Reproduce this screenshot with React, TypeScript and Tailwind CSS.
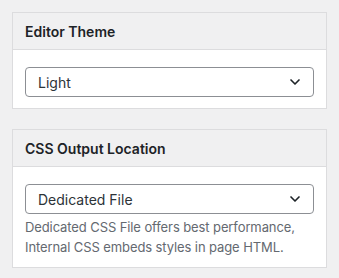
import { ChevronDown } from 'lucide-react';

interface PanelProps {
  title: string;
  value: string;
  description?: string;
}

function Panel({ title, value, description }: PanelProps) {
  return (
    <div className="border border-[#dcdcde] bg-white">
      {/* Header */}
      <div className="flex h-[37px] items-center border-b border-[#dcdcde] bg-[#f0f0f1] px-3">
        <h2 className="text-[14px] font-semibold text-[#1d2327]">{title}</h2>
      </div>

      {/* Body */}
      <div className={description ? 'px-3 pt-[17px] pb-[10px]' : 'px-3 pt-[17px] pb-[11px]'}>
        <div className="flex h-[30px] items-center justify-between rounded-[4px] border border-[#8c8f94] bg-white pr-[10px] pl-3">
          <span className="text-[14px] text-[#2c3338]">{value}</span>
          <ChevronDown className="h-4 w-4 text-[#1d2327]" strokeWidth={2.5} />
        </div>
        {description && (
          <p className="mt-[4px] text-[13px] leading-[19.5px] tracking-[-0.1px] text-[#646970]">
            {description}
          </p>
        )}
      </div>
    </div>
  );
}

export default function App() {
  return (
    <div
      className="min-h-screen bg-[#f0f0f1] p-3"
      style={{ fontFamily: 'Inter, "Noto Sans", sans-serif' }}
    >
      <div className="flex flex-col gap-5">
        <Panel title="Editor Theme" value="Light" />
        <Panel
          title="CSS Output Location"
          value="Dedicated File"
          description="Dedicated CSS File offers best performance, Internal CSS embeds styles in page HTML."
        />
      </div>
    </div>
  );
}
